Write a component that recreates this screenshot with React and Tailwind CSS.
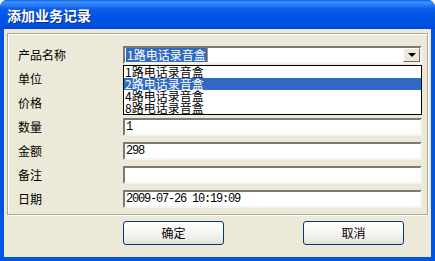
import React from "react";

const cjk = 'font-["SimSun","Noto_Sans_CJK_SC",sans-serif]';

function Field({ label, children }) {
  return (
    <div className="flex h-[18px] items-center">
      <span className="w-[115px] pl-[10px] text-[12px] leading-none text-black">{label}</span>
      {children}
    </div>
  );
}

function TextBox({ value, mono }) {
  return (
    <div className="flex h-[18px] w-[299px] items-center border-2 border-t-[#7b7b72] border-l-[#7b7b72] border-r-[#f4f3ee] border-b-[#f4f3ee] bg-white pl-[1px]">
      <span
        className={
          mono
            ? 'font-["Liberation_Mono",monospace] text-[12px] leading-none tracking-[-1.2px] text-black'
            : "text-[12px] leading-none text-black"
        }
      >
        {value}
      </span>
    </div>
  );
}

const items = ["1路电话录音盒", "2路电话录音盒", "4路电话录音盒", "8路电话录音盒"];

export default function App() {
  return (
    <div className={`${cjk} w-[435px] h-[261px] overflow-hidden`}>
      <div className="flex h-full flex-col rounded-t-[7px] bg-[#0055e5]">
        {/* title bar */}
        <div className="flex h-[29px] shrink-0 items-center rounded-t-[7px] bg-[linear-gradient(to_bottom,#0a5fe8_0px,#3e92ff_2px,#2a7cf7_5px,#0d5de9_9px,#0055e8_16px,#0052e2_24px,#0047d4_29px)] pl-[7px]">
          <span className="text-[14px] font-bold leading-none text-white [text-shadow:1px_1px_0_#0a2c8a]">
            添加业务记录
          </span>
        </div>

        {/* client area */}
        <div className="mx-[4px] mb-[4px] flex flex-1 flex-col bg-[#ece9d8] pt-[4px] pl-[3px] pr-[3px]">
          {/* group box */}
          <div className="relative flex h-[182px] flex-col gap-[6px] border border-[#aca899] pt-[12px] shadow-[inset_1px_1px_0_#fff,1px_1px_0_#fff]">
            <Field label="产品名称">
              <div className="flex h-[18px] w-[299px] items-center border-2 border-t-[#7b7b72] border-l-[#7b7b72] border-r-[#f4f3ee] border-b-[#f4f3ee] bg-white">
                <span className="ml-[1px] flex h-[14px] items-center bg-[#316ac5] px-[1px] text-[12px] leading-none text-white">
                  1路电话录音盒
                </span>
                <span className="h-[14px] w-[1px] bg-[#d88a3a]" />
                <div className="ml-auto flex h-[14px] w-[17px] items-center justify-center border border-t-[#fff] border-l-[#fff] border-r-[#716f64] border-b-[#716f64] bg-[#ece9d8]">
                  <span className="h-0 w-0 border-x-[4px] border-t-[4px] border-x-transparent border-t-black" />
                </div>
              </div>
            </Field>
            <Field label="单位">
              <TextBox value="" />
            </Field>
            <Field label="价格">
              <TextBox value="" />
            </Field>
            <Field label="数量">
              <TextBox value="1" mono />
            </Field>
            <Field label="金额">
              <TextBox value="298" mono />
            </Field>
            <Field label="备注">
              <TextBox value="" />
            </Field>
            <Field label="日期">
              <TextBox value="2009-07-26 10:19:09" mono />
            </Field>

            {/* open dropdown list */}
            <div className="absolute left-[115px] top-[31px] w-[299px] border border-black bg-white">
              {items.map((t, i) => (
                <div
                  key={t}
                  className={
                    i === 1
                      ? "flex h-[12px] items-center bg-[#316ac5] pl-[1px] text-[12px] leading-[12px] text-white"
                      : "flex h-[12px] items-center pl-[1px] text-[12px] leading-[12px] text-black"
                  }
                >
                  {t}
                </div>
              ))}
            </div>
          </div>

          {/* buttons */}
          <div className="mt-[6px] flex gap-[79px] pl-[116px]">
            <button className="h-[24px] w-[101px] rounded-[3px] border border-[#003c74] bg-[linear-gradient(to_bottom,#ffffff,#f4f3ee_60%,#e3e1d6)] text-[12px] leading-none text-black">
              确定
            </button>
            <button className="h-[24px] w-[101px] rounded-[3px] border border-[#003c74] bg-[linear-gradient(to_bottom,#ffffff,#f4f3ee_60%,#e3e1d6)] text-[12px] leading-none text-black">
              取消
            </button>
          </div>
        </div>
      </div>
    </div>
  );
}
